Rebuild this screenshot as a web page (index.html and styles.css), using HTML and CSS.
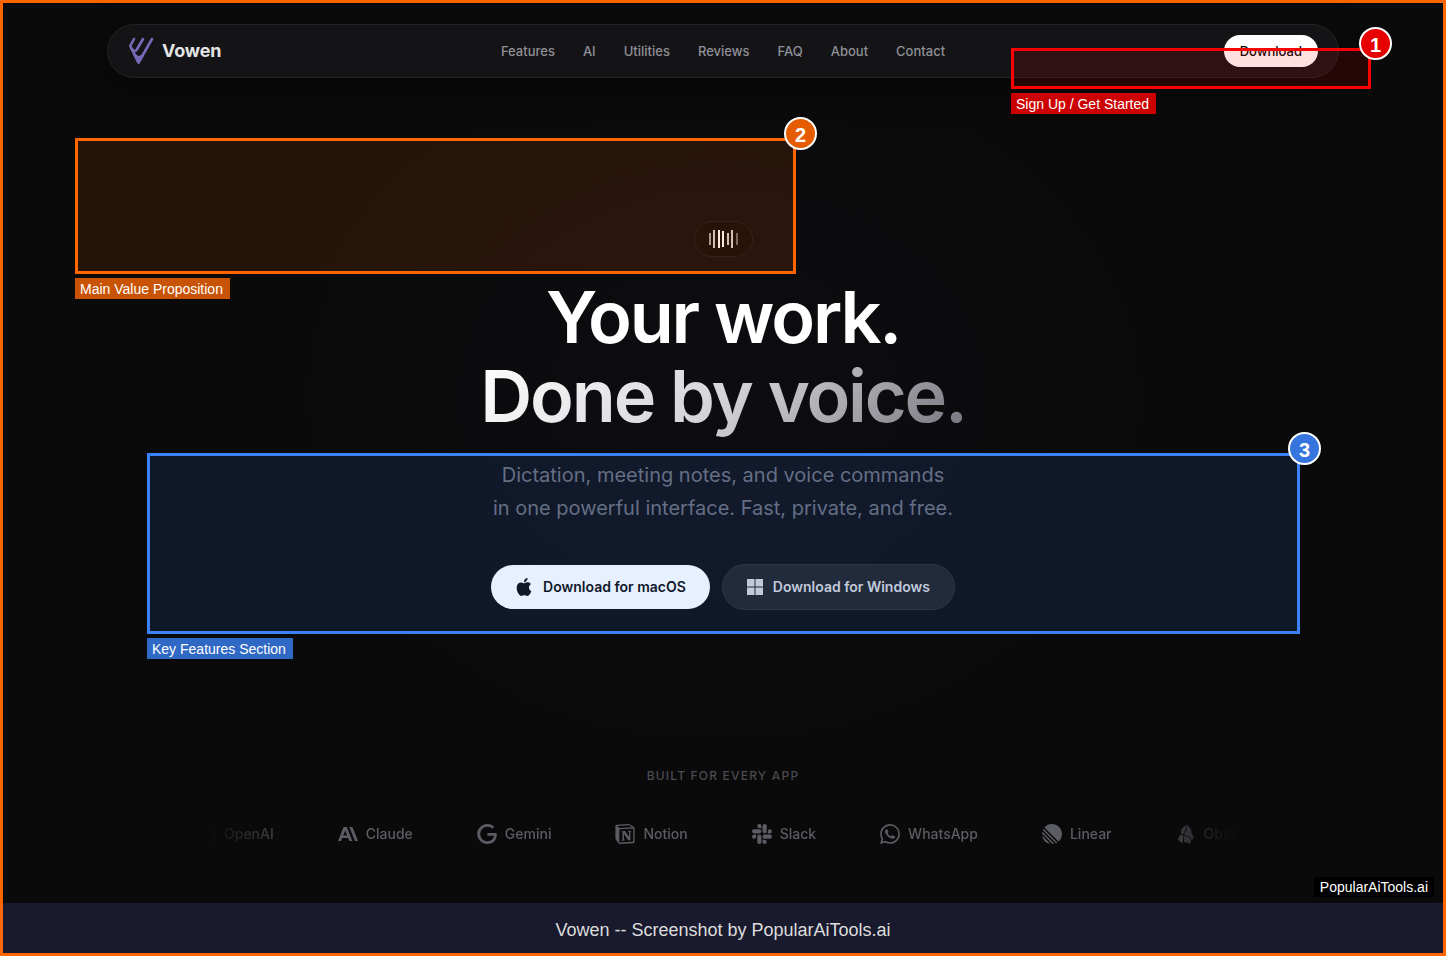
FILE: index.html
```html
<!DOCTYPE html>
<html lang="en">
<head>
    <meta charset="UTF-8">
    <meta name="viewport" content="width=device-width, initial-scale=1.0">
    <title>Vowen - Your work. Done by voice.</title>
    <link rel="stylesheet" href="styles.css">
</head>
<body>
    <div class="frame">
        <div class="shot">
            <!-- Navigation -->
            <header class="navbar">
                <a href="#" class="brand">
                    <svg class="brand-mark" viewBox="0 0 26 28" fill="none" stroke="#7868b8" stroke-width="2.6" stroke-linecap="round" stroke-linejoin="round">
                        <path d="M6 2L2.200 9L10.500 25.500L24 2"/>
                        <path d="M15 2L8.500 13Q6.500 15.500 3.500 11.500"/>
                        <path d="M6.500 17.500L10.500 25.500L14.500 18.500Q10.500 22.500 6.500 17.500" fill="#7868b8"/>
                    </svg>
                    Vowen
                </a>
                <nav class="nav-links">
                    <a href="#features">Features</a>
                    <a href="#ai">AI</a>
                    <a href="#utilities">Utilities</a>
                    <a href="#reviews">Reviews</a>
                    <a href="#faq">FAQ</a>
                    <a href="#about">About</a>
                    <a href="#contact">Contact</a>
                </nav>
                <div class="nav-action">
                    <button type="button" class="nav-download">Download</button>
                </div>
            </header>

            <!-- Hero -->
            <main class="hero">
                <div class="wave">
                    <span class="bar short dim"></span>
                    <span class="bar tall soft"></span>
                    <span class="bar tall"></span>
                    <span class="bar mid"></span>
                    <span class="bar short soft"></span>
                    <span class="bar tall soft"></span>
                    <span class="bar short faint"></span>
                </div>
                <h1>Your work.<br><span class="fade">Done by voice.</span></h1>
                <p class="lead">Dictation, meeting notes, and voice commands<br>in one powerful interface. Fast, private, and free.</p>
                <div class="downloads">
                    <button type="button" class="btn btn-light">
                        <svg class="btn-icon" viewBox="0 0 24 24" fill="currentColor"><path d="M12.152 6.896c-.948 0-2.415-1.078-3.960-1.040-2.040.027-3.910 1.183-4.961 3.014-2.117 3.675-.546 9.103 1.519 12.090 1.013 1.454 2.208 3.090 3.792 3.039 1.520-.065 2.090-.987 3.935-.987 1.831 0 2.350.987 3.960.948 1.637-.026 2.676-1.480 3.676-2.948 1.156-1.688 1.636-3.325 1.662-3.415-.039-.013-3.182-1.221-3.220-4.857-.026-3.040 2.480-4.494 2.597-4.559-1.429-2.090-3.623-2.324-4.390-2.376-2-.156-3.675 1.090-4.610 1.090zM15.530 3.830c.843-1.012 1.400-2.427 1.245-3.830-1.207.052-2.662.805-3.532 1.818-.780.896-1.454 2.338-1.273 3.714 1.338.104 2.715-.688 3.559-1.701"/></svg>
                        Download for macOS
                    </button>
                    <button type="button" class="btn btn-dark">
                        <svg class="btn-icon" viewBox="0 0 16 16" fill="currentColor"><path d="M0 0h7.500v7.500H0zM8.500 0H16v7.500H8.500zM0 8.500h7.500V16H0zM8.500 8.500H16V16H8.500z"/></svg>
                        Download for Windows
                    </button>
                </div>
            </main>

            <!-- App logos -->
            <section class="apps">
                <h2>BUILT FOR EVERY APP</h2>
                <div class="strip">
                    <ul class="track">
                        <li>
                            <svg viewBox="0 0 24 24" fill="none" stroke="currentColor" stroke-width="1.6"><path d="M12 2a5 5 0 0 1 4.500 2.800 5 5 0 0 1 5 7.200 5 5 0 0 1-2.500 7.500A5 5 0 0 1 12 22a5 5 0 0 1-4.500-2.800 5 5 0 0 1-5-7.200A5 5 0 0 1 5 4.500 5 5 0 0 1 12 2M8 18V8l8-4M8 8l9 5v6M16 6l-5 3v6l5 3"/></svg>
                            OpenAI
                        </li>
                        <li>
                            <svg viewBox="0 0 24 24" fill="currentColor"><path d="M17.304 3.541h-3.672l6.696 16.918H24zm-10.608 0L0 20.459h3.744l1.369-3.553h7.006l1.369 3.553h3.744L10.536 3.541zm-.371 10.223l2.291-5.946 2.292 5.946z"/></svg>
                            Claude
                        </li>
                        <li>
                            <svg viewBox="0 0 24 24" fill="currentColor"><path d="M12.480 10.920v3.280h7.840c-.240 1.840-.853 3.187-1.787 4.133-1.147 1.147-2.933 2.400-6.053 2.400-4.827 0-8.600-3.893-8.600-8.720s3.773-8.720 8.600-8.720c2.600 0 4.507 1.027 5.907 2.347l2.307-2.307C18.747 1.440 16.133 0 12.480 0 5.867 0 .307 5.387.307 12s5.560 12 12.173 12c3.573 0 6.267-1.173 8.373-3.360 2.160-2.160 2.840-5.213 2.840-7.667 0-.760-.053-1.467-.173-2.053H12.480z"/></svg>
                            Gemini
                        </li>
                        <li>
                            <svg viewBox="0 0 24 24" fill="currentColor"><path d="M4.459 4.208c.746.606 1.026.56 2.428.466l13.215-.793c.28 0 .047-.28-.046-.326L17.860 1.968c-.42-.326-.981-.7-2.055-.607L3.010 2.295c-.466.046-.56.28-.374.466zm.793 3.080v13.904c0 .747.373 1.027 1.214.98l14.523-.84c.841-.046.935-.56.935-1.167V6.354c0-.606-.233-.933-.748-.887l-15.177.887c-.56.047-.747.327-.747.933zm14.337.745c.093.42 0 .84-.42.888l-.7.14v10.264c-.608.327-1.168.514-1.635.514-.748 0-.935-.234-1.495-.933l-4.577-7.186v6.952L12.210 19s0 .84-1.168.84l-3.222.186c-.093-.186 0-.653.327-.746l.84-.233V9.854L7.822 9.760c-.094-.42.14-1.026.793-1.073l3.456-.233 4.764 7.279v-6.440l-1.215-.139c-.093-.514.28-.887.747-.933zM1.936 1.035l13.310-.98c1.634-.14 2.055-.047 3.082.7l4.249 2.986c.7.513.934.653.934 1.213v16.378c0 1.026-.373 1.634-1.680 1.726l-15.458.934c-.98.047-1.448-.093-1.962-.747l-3.129-4.060c-.56-.747-.793-1.306-.793-1.960V2.667c0-.839.374-1.540 1.447-1.632z"/></svg>
                            Notion
                        </li>
                        <li>
                            <svg viewBox="0 0 24 24" fill="currentColor"><path d="M5.042 15.165a2.528 2.528 0 0 1-2.520 2.523A2.528 2.528 0 0 1 0 15.165a2.527 2.527 0 0 1 2.522-2.520h2.520v2.520zM6.313 15.165a2.527 2.527 0 0 1 2.521-2.520 2.527 2.527 0 0 1 2.521 2.520v6.313A2.528 2.528 0 0 1 8.834 24a2.528 2.528 0 0 1-2.521-2.522v-6.313zM8.834 5.042a2.528 2.528 0 0 1-2.521-2.520A2.528 2.528 0 0 1 8.834 0a2.528 2.528 0 0 1 2.521 2.522v2.520H8.834zM8.834 6.313a2.528 2.528 0 0 1 2.521 2.521 2.528 2.528 0 0 1-2.521 2.521H2.522A2.528 2.528 0 0 1 0 8.834a2.528 2.528 0 0 1 2.522-2.521h6.312zM18.956 8.834a2.528 2.528 0 0 1 2.522-2.521A2.528 2.528 0 0 1 24 8.834a2.528 2.528 0 0 1-2.522 2.521h-2.522V8.834zM17.688 8.834a2.528 2.528 0 0 1-2.523 2.521 2.527 2.527 0 0 1-2.520-2.521V2.522A2.527 2.527 0 0 1 15.165 0a2.528 2.528 0 0 1 2.523 2.522v6.312zM15.165 18.956a2.528 2.528 0 0 1 2.523 2.522A2.528 2.528 0 0 1 15.165 24a2.527 2.527 0 0 1-2.520-2.522v-2.522h2.520zM15.165 17.688a2.527 2.527 0 0 1-2.520-2.523 2.526 2.526 0 0 1 2.520-2.520h6.313A2.527 2.527 0 0 1 24 15.165a2.528 2.528 0 0 1-2.522 2.523h-6.313z"/></svg>
                            Slack
                        </li>
                        <li>
                            <svg viewBox="0 0 24 24" fill="currentColor"><path d="M17.472 14.382c-.297-.149-1.758-.867-2.030-.967-.273-.099-.471-.148-.67.15-.197.297-.767.966-.94 1.164-.173.199-.347.223-.644.075-.297-.15-1.255-.463-2.390-1.475-.883-.788-1.480-1.761-1.653-2.059-.173-.297-.018-.458.13-.606.134-.133.298-.347.446-.52.149-.174.198-.298.298-.497.099-.198.05-.371-.025-.52-.075-.149-.669-1.612-.916-2.207-.242-.579-.487-.5-.669-.51-.173-.008-.371-.01-.57-.01-.198 0-.52.074-.792.372-.272.297-1.040 1.016-1.040 2.479 0 1.462 1.065 2.875 1.213 3.074.149.198 2.096 3.200 5.077 4.487.709.306 1.262.489 1.694.625.712.227 1.360.195 1.871.118.571-.085 1.758-.719 2.006-1.413.248-.694.248-1.289.173-1.413-.074-.124-.272-.198-.57-.347m-5.421 7.403h-.004a9.870 9.870 0 0 1-5.031-1.378l-.361-.214-3.741.982.998-3.648-.235-.374a9.860 9.860 0 0 1-1.510-5.260c.001-5.450 4.436-9.884 9.888-9.884 2.640 0 5.122 1.030 6.988 2.898a9.825 9.825 0 0 1 2.893 6.994c-.003 5.450-4.437 9.884-9.885 9.884m8.413-18.297A11.815 11.815 0 0 0 12.050 0C5.495 0 .16 5.335.157 11.892c0 2.096.547 4.142 1.588 5.945L.057 24l6.305-1.654a11.882 11.882 0 0 0 5.683 1.448h.005c6.554 0 11.890-5.335 11.893-11.893a11.821 11.821 0 0 0-3.480-8.413z"/></svg>
                            WhatsApp
                        </li>
                        <li>
                            <svg viewBox="0 0 24 24" fill="currentColor"><path d="M2.886 4.180A11.982 11.982 0 0 1 11.990 0C18.624 0 24 5.376 24 12.009c0 3.640-1.620 6.903-4.180 9.105L2.887 4.180ZM1.817 5.626l16.556 16.556c-.524.33-1.075.62-1.650.866L.951 7.277c.247-.575.537-1.126.866-1.650ZM.322 9.163l14.515 14.515c-.71.172-1.443.282-2.195.322L0 11.358a12 12 0 0 1 .322-2.195Zm-.17 4.862 9.823 9.824a12.020 12.020 0 0 1-9.824-9.824Z"/></svg>
                            Linear
                        </li>
                        <li>
                            <svg viewBox="0 0 24 24" fill="currentColor"><path d="M12.800.3L6.500 6l-.5 5.500 2.200 1q3-4.500 4-8zM13.600.8L12.900 5q-1 4-3.700 7.700 2.500-.2 4.300 1.900 4 .4 5.500 5.200l2.600-4-2.800-4.300-.5-5zM5.500 12.300l-3.300 6.200 5.300 4.800q2.500-5.500 0-10.100zM8.700 13.700q2 4 .8 8 4.500 0 7.500 2.300l1-2.800q-.5-5-4.500-5.600-2-2.200-4.800-1.900z"/></svg>
                            Obsidian
                        </li>
                    </ul>
                </div>
            </section>

            <!-- Callouts -->
            <div class="callout callout-signup">
                <span class="callout-number">1</span>
                <span class="callout-label">Sign Up / Get Started</span>
            </div>
            <div class="callout callout-value">
                <span class="callout-number">2</span>
                <span class="callout-label">Main Value Proposition</span>
            </div>
            <div class="callout callout-features">
                <span class="callout-number">3</span>
                <span class="callout-label">Key Features Section</span>
            </div>
            <span class="watermark">PopularAiTools.ai</span>
        </div>
        <footer class="caption">Vowen -- Screenshot by PopularAiTools.ai</footer>
    </div>
</body>
</html>
```
FILE: styles.css
```css
* {
    box-sizing: border-box;
}
body {
    margin: 0;
    font-family: Inter, sans-serif;
    background-color: #0a0a0a;
    color: #fff;
}
button {
    font-family: inherit;
    border: none;
    cursor: pointer;
}
.frame {
    min-height: 100vh;
    border: 3px solid #ff6600;
    display: flex;
    flex-direction: column;
}
.shot {
    position: relative;
    flex: 1;
    padding: 21px 24px 0;
    background: radial-gradient(ellipse 430px 350px at 50% 397px, #0d0c11, #0a0a0a);
}

/* Navigation */
.navbar {
    display: grid;
    grid-template-columns: 1fr auto 1fr;
    align-items: center;
    max-width: 1232px;
    height: 54px;
    margin: 0 auto;
    padding: 0 20px;
    background-color: #141416;
    border: 1px solid #232325;
    border-radius: 27px;
    box-shadow: 0 8px 32px rgba(0,0,0,0.4);
}
.brand {
    display: flex;
    align-items: center;
    gap: 8px;
    color: #e4e4e7;
    font-size: 18px;
    font-weight: 700;
    line-height: 20px;
    letter-spacing: -0.01em;
    text-decoration: none;
}
.brand-mark {
    width: 26px;
    height: 28px;
}
.nav-links {
    display: flex;
    gap: 28px;
}
.nav-links a {
    color: #8f8f96;
    font-size: 13px;
    font-weight: 500;
    line-height: 18px;
    text-decoration: none;
}
.nav-action {
    text-align: right;
}
.nav-download {
    height: 32px;
    padding: 0 16px;
    border-radius: 16px;
    background-color: #fff;
    color: #0a0a0b;
    font-size: 13px;
    font-weight: 500;
    line-height: 18px;
}

/* Hero */
.hero {
    display: flex;
    flex-direction: column;
    align-items: center;
    padding-top: 143px;
    text-align: center;
}
.wave {
    display: flex;
    align-items: center;
    justify-content: space-between;
    width: 59px;
    height: 36px;
    padding: 0 14px;
    border: 1px solid #1b1a1c;
    border-radius: 18px;
    background-color: #0a0909;
}
.bar {
    width: 2px;
    background-color: #fff;
}
.short {
    height: 12px;
}
.mid {
    height: 16px;
}
.tall {
    height: 18px;
}
.soft {
    opacity: 0.8;
}
.dim {
    opacity: 0.6;
}
.faint {
    opacity: 0.4;
}
h1 {
    margin: 20px 0 0;
    font-size: 72px;
    font-weight: 600;
    line-height: 79px;
    letter-spacing: -0.03em;
}
/* extra padding keeps the descender inside the clipped gradient */
.fade {
    display: inline-block;
    padding-bottom: 8px;
    background: linear-gradient(135deg, #fff 0%, #d4d4d8 50%, #71717a 100%);
    -webkit-background-clip: text;
    background-clip: text;
    color: transparent;
}
.lead {
    margin: 16px 0 0;
    color: #6b6b76;
    font-size: 20px;
    line-height: 33px;
}
.downloads {
    display: flex;
    align-items: center;
    gap: 12px;
    margin-top: 39px;
}
.btn {
    display: flex;
    align-items: center;
    gap: 10px;
    height: 44px;
    padding: 0 24px;
    border-radius: 23px;
    font-size: 14px;
    font-weight: 600;
    line-height: 18px;
}
.btn-icon {
    width: 18px;
    height: 18px;
}
.btn-light {
    background-color: #fff;
    color: #0a0a0b;
}
.btn-dark {
    height: 46px;
    border: 1px solid #2d2d31;
    background-color: #1f1f22;
    color: #d4d4d8;
}
.btn-dark .btn-icon {
    width: 16px;
    height: 16px;
}

/* App logos */
.apps {
    padding-top: 158px;
    text-align: center;
}
h2 {
    margin: 0;
    color: #4a4a51;
    font-size: 12px;
    font-weight: 500;
    line-height: 16px;
    letter-spacing: 0.1em;
}
.strip {
    max-width: 1032px;
    margin: 40px auto 0;
    overflow: hidden;
    -webkit-mask-image: linear-gradient(to right, transparent, #000 10%, #000 90%, transparent);
    mask-image: linear-gradient(to right, transparent, #000 10%, #000 90%, transparent);
}
.track {
    display: flex;
    gap: 64px;
    width: max-content;
    margin: 0 0 0 -11px;
    padding: 0;
    list-style: none;
}
.track li {
    display: flex;
    align-items: center;
    gap: 8px;
    color: #5c5c65;
    font-size: 14px;
    font-weight: 500;
    line-height: 20px;
}
.track svg {
    width: 20px;
    height: 20px;
}

/* Callouts */
.callout {
    position: absolute;
    border: 3px solid;
    font-family: "Liberation Sans", Arial, sans-serif;
}
.callout-number {
    position: absolute;
    top: -24px;
    right: -24px;
    width: 33px;
    height: 33px;
    border: 2px solid #fff;
    border-radius: 50%;
    color: #fff;
    font-size: 20px;
    font-weight: bold;
    line-height: 32px;
    text-align: center;
}
.callout-label {
    position: absolute;
    top: calc(100% + 7px);
    left: -3px;
    padding: 1px 7px 0 5px;
    color: #fff;
    font-size: 14px;
    line-height: 20px;
    white-space: nowrap;
}
.callout-signup {
    top: 45px;
    left: 70%;
    width: 25%;
    height: 41px;
    border-color: #ff0000;
    background-color: rgba(255,0,0,0.12);
}
.callout-signup .callout-number {
    background-color: #e60000;
}
.callout-signup .callout-label {
    background-color: #cc0000;
}
.callout-value {
    top: 135px;
    left: 5%;
    width: calc(50% + 1px);
    height: 136px;
    border-color: #ff6600;
    background-color: rgba(255,102,0,0.12);
}
.callout-value .callout-number {
    background-color: #e65c00;
}
.callout-value .callout-label {
    background-color: #c95305;
}
.callout-features {
    top: 450px;
    left: 10%;
    width: calc(80% + 1px);
    height: 181px;
    border-color: #3b82f6;
    background-color: rgba(59,130,246,0.12);
}
.callout-features .callout-number {
    background-color: #3575dd;
}
.callout-features .callout-label {
    background-color: #3069c5;
}
.watermark {
    position: absolute;
    right: 9px;
    bottom: 6px;
    padding: 0 6px;
    background-color: #000;
    color: #fff;
    font-family: "Liberation Sans", Arial, sans-serif;
    font-size: 14px;
    line-height: 20px;
}
.caption {
    height: 50px;
    background-color: #1a1a2e;
    color: #ddd;
    font-family: "Liberation Sans", Arial, sans-serif;
    font-size: 18px;
    line-height: 54px;
    text-align: center;
}
```
